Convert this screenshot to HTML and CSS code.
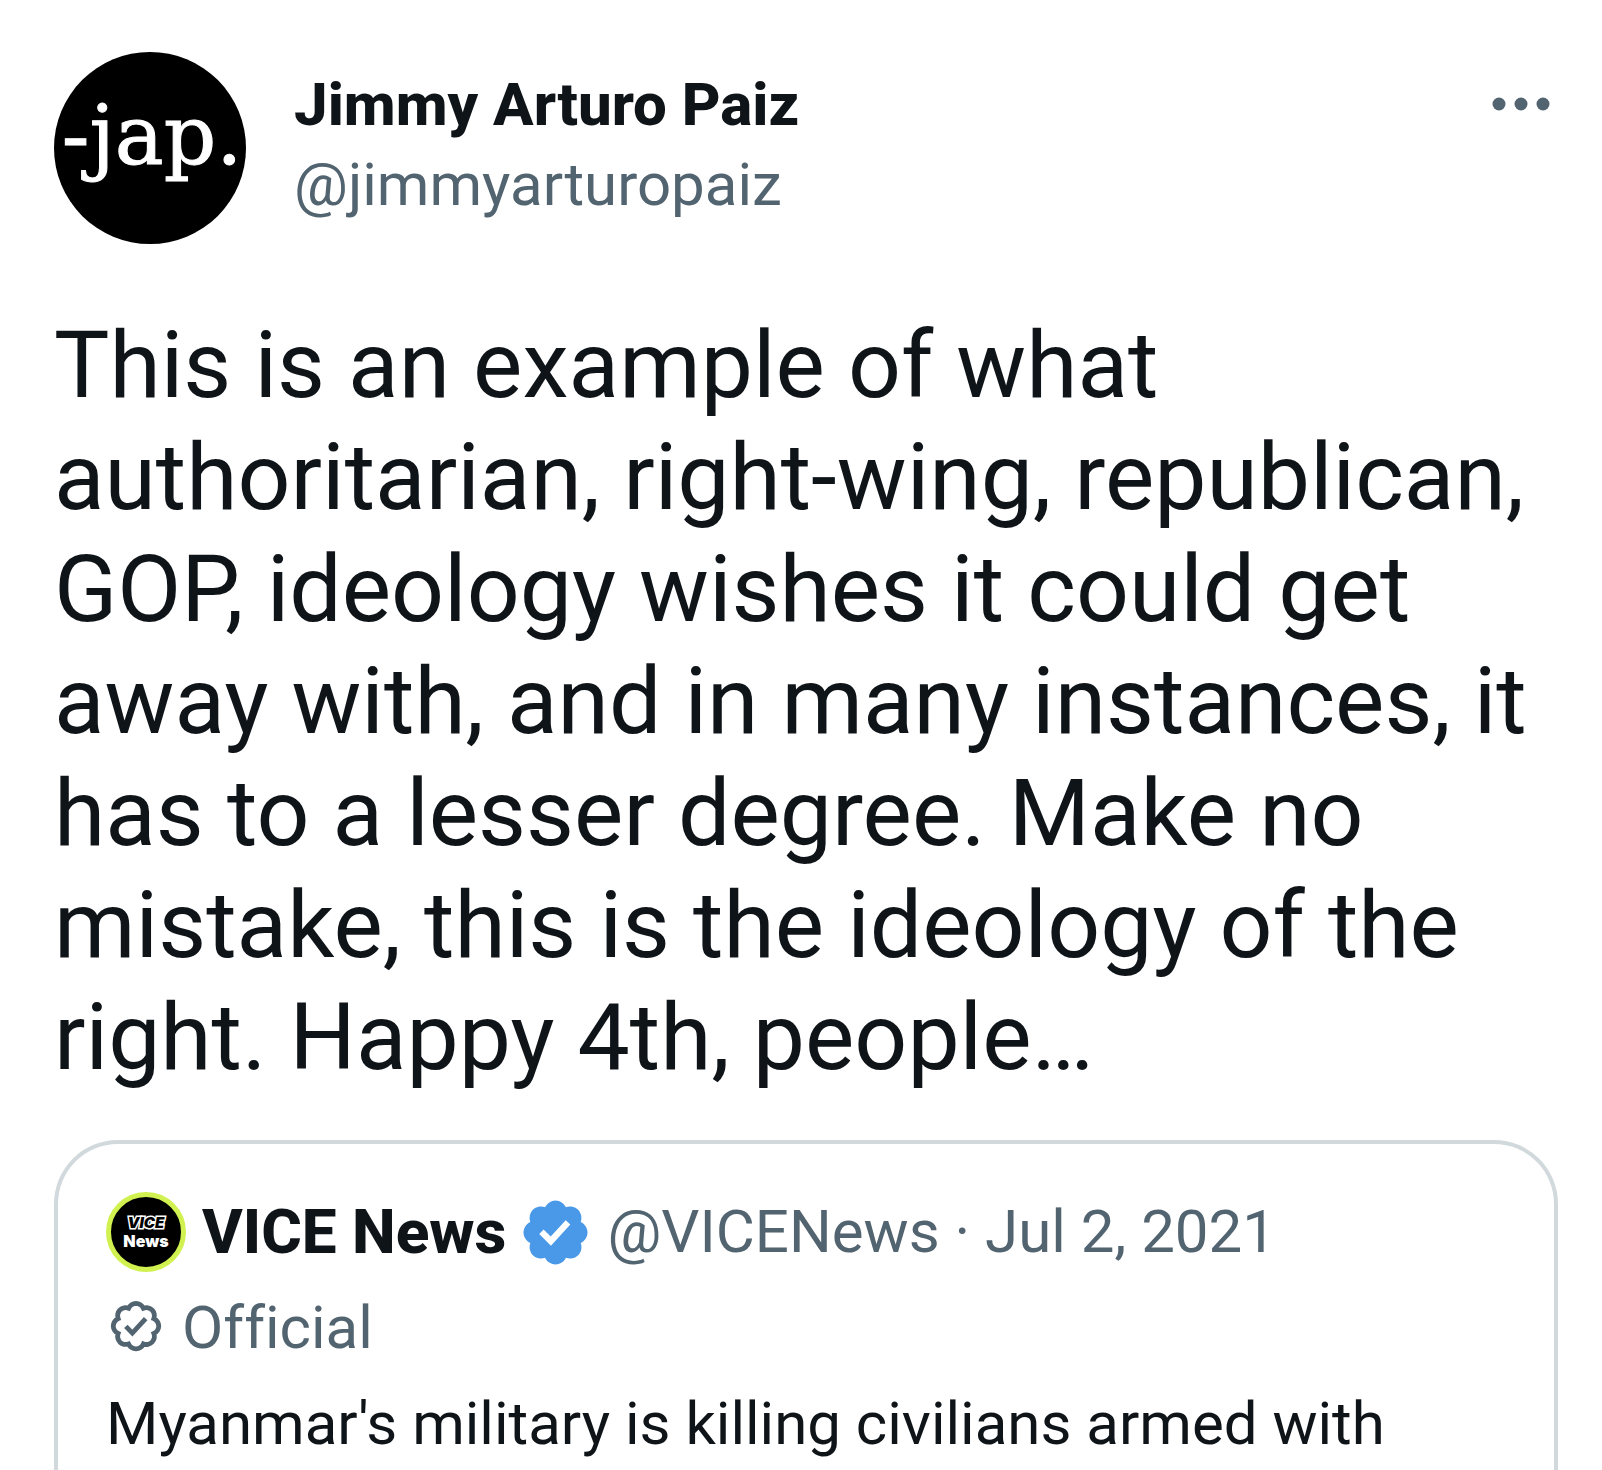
FILE: index.html
```html
<!DOCTYPE html>
<html lang="en">
<head>
  <meta charset="utf-8">
  <meta name="viewport" content="width=device-width, initial-scale=1">
  <title>Jimmy Arturo Paiz</title>
  <link rel="stylesheet" href="styles.css">
</head>
<body>
  <article class="tweet">
    <header class="author">
      <a class="avatar" href="#">
        <svg class="avatar-art" viewBox="0 0 192 192" aria-hidden="true">
          <circle cx="96" cy="96" r="96" fill="#000"/>
          <text class="avatar-text" x="98" y="112" text-anchor="middle">-jap.</text>
        </svg>
      </a>
      <div class="names">
        <a class="name" href="#">Jimmy Arturo Paiz</a>
        <a class="handle" href="#">@jimmyarturopaiz</a>
      </div>
      <button class="more" type="button" aria-label="More">
        <svg class="more-icon" viewBox="0 0 60 16" aria-hidden="true">
          <circle cx="9" cy="8" r="6.5"/><circle cx="31" cy="8" r="6.5"/><circle cx="53" cy="8" r="6.5"/>
        </svg>
      </button>
    </header>

    <p class="body-text">This is an example of what authoritarian, right-wing, republican, GOP, ideology wishes it could get away with, and in many instances, it has to a lesser degree. Make no mistake, this is the ideology of the right. Happy 4th, people…</p>

    <section class="quote">
      <div class="quote-head">
        <svg class="quote-avatar" viewBox="0 0 80 80" aria-hidden="true">
          <circle cx="40" cy="40" r="37.5" fill="#000" stroke="#d0f14f" stroke-width="5"/>
          <text class="logo-vice" x="40" y="36" text-anchor="middle">VICE</text>
          <text class="logo-news" x="40" y="55" text-anchor="middle">News</text>
        </svg>
        <a class="quote-name" href="#">VICE News</a>
        <svg class="verified" viewBox="0 0 22 22" role="img" aria-label="Verified">
          <path d="M20.396 11c-.018-.646-.215-1.275-.57-1.816-.354-.54-.852-.972-1.438-1.246.223-.607.27-1.264.14-1.897-.131-.634-.437-1.218-.882-1.687-.47-.445-1.053-.75-1.687-.882-.633-.13-1.29-.083-1.897.14-.273-.587-.704-1.086-1.245-1.44S11.647 1.62 11 1.604c-.646.017-1.273.213-1.813.568s-.969.854-1.24 1.44c-.608-.223-1.267-.272-1.902-.14-.635.13-1.22.436-1.69.882-.445.47-.749 1.055-.878 1.688-.13.633-.08 1.29.144 1.896-.587.274-1.087.705-1.443 1.245-.356.54-.555 1.17-.574 1.817.02.647.218 1.276.574 1.817.356.54.856.972 1.443 1.245-.224.606-.274 1.263-.144 1.896.13.634.433 1.218.877 1.688.47.443 1.054.747 1.687.878.633.132 1.29.084 1.897-.136.274.586.705 1.084 1.246 1.439.54.354 1.17.551 1.816.569.647-.016 1.276-.213 1.817-.567s.972-.854 1.245-1.44c.604.239 1.266.296 1.903.164.636-.132 1.22-.447 1.68-.907.46-.46.776-1.044.908-1.681s.075-1.299-.165-1.903c.586-.274 1.084-.705 1.439-1.246.354-.54.551-1.17.569-1.816zM9.662 14.85l-3.429-3.428 1.293-1.302 2.072 2.072 4.4-4.794 1.347 1.246z"/>
        </svg>
        <span class="quote-meta">@VICENews · Jul 2, 2021</span>
      </div>
      <div class="official">
        <svg class="official-icon" viewBox="-1.4 -0.6 24.8 24.8" aria-hidden="true">
          <path d="M20.396 11c-.018-.646-.215-1.275-.57-1.816-.354-.54-.852-.972-1.438-1.246.223-.607.27-1.264.14-1.897-.131-.634-.437-1.218-.882-1.687-.47-.445-1.053-.75-1.687-.882-.633-.13-1.29-.083-1.897.14-.273-.587-.704-1.086-1.245-1.44S11.647 1.62 11 1.604c-.646.017-1.273.213-1.813.568s-.969.854-1.24 1.44c-.608-.223-1.267-.272-1.902-.14-.635.13-1.22.436-1.69.882-.445.47-.749 1.055-.878 1.688-.13.633-.08 1.29.144 1.896-.587.274-1.087.705-1.443 1.245-.356.54-.555 1.17-.574 1.817.02.647.218 1.276.574 1.817.356.54.856.972 1.443 1.245-.224.606-.274 1.263-.144 1.896.13.634.433 1.218.877 1.688.47.443 1.054.747 1.687.878.633.132 1.29.084 1.897-.136.274.586.705 1.084 1.246 1.439.54.354 1.17.551 1.816.569.647-.016 1.276-.213 1.817-.567s.972-.854 1.245-1.44c.604.239 1.266.296 1.903.164.636-.132 1.22-.447 1.68-.907.46-.46.776-1.044.908-1.681s.075-1.299-.165-1.903c.586-.274 1.084-.705 1.439-1.246.354-.54.551-1.17.569-1.816z"/>
          <path d="M6.8 11.1L9.5 13.9L15 7.9"/>
        </svg>
        <span>Official</span>
      </div>
      <p class="quote-text">Myanmar's military is killing civilians armed with</p>
    </section>
  </article>
</body>
</html>
```
FILE: styles.css
```css
* {
  box-sizing: border-box;
}

body {
  margin: 0;
  background: #fff;
  color: #0f1419;
  font-family: Roboto, "Liberation Sans", sans-serif;
  font-size: 60px;
  font-variant-ligatures: none;
  line-height: 80px;
}

a {
  color: inherit;
  text-decoration: none;
}

p {
  margin: 0;
}

.tweet {
  display: flex;
  flex-direction: column;
  min-height: 100vh;
  padding: 52px 44px 0 54px;
}

.author {
  display: flex;
  align-items: flex-start;
  gap: 48px;
  margin-bottom: 66px;
}

.avatar,
.avatar-art {
  display: block;
  width: 192px;
  height: 192px;
}

.avatar-text {
  fill: #fff;
  stroke: #fff;
  stroke-width: 1px;
  font-family: "DejaVu Serif", serif;
  font-size: 82px;
}

.names {
  display: flex;
  flex: 1;
  flex-direction: column;
  padding-top: 13px;
}

.name,
.quote-name {
  font-weight: 800;
}

.handle,
.quote-meta,
.official {
  color: #536471;
}

.more {
  padding: 44px 8px 0;
  border: 0;
  background: none;
  cursor: pointer;
}

.more-icon {
  display: block;
  width: 60px;
  height: 16px;
  fill: #536471;
}

.body-text {
  margin-bottom: 46px;
  font-size: 93px;
  line-height: 112px;
}

.quote {
  display: flex;
  flex: 1;
  flex-direction: column;
  gap: 16px;
  padding: 48px 48px 0;
  border: 4px solid #d1d9dc;
  border-bottom: 0;
  border-radius: 64px 64px 0 0;
}

.quote-head {
  display: flex;
  align-items: center;
}

.quote-avatar {
  width: 80px;
  height: 80px;
  margin-right: 16px;
}

.logo-vice,
.logo-news {
  font-family: Inter, sans-serif;
  font-weight: 900;
}

.logo-vice {
  fill: #000;
  stroke: #fff;
  stroke-width: 3px;
  paint-order: stroke;
  font-size: 15px;
  font-style: italic;
}

.logo-news {
  fill: #fff;
  font-size: 16px;
}

.quote-name {
  font-size: 62px;
}

.verified {
  width: 75px;
  height: 75px;
  margin: 0 14px 0 12px;
  fill: #4a99e9;
}

.official {
  display: flex;
  align-items: center;
  gap: 16px;
}

.official-icon {
  width: 60px;
  height: 60px;
  fill: none;
  stroke: #536471;
  stroke-width: 2;
}
```
